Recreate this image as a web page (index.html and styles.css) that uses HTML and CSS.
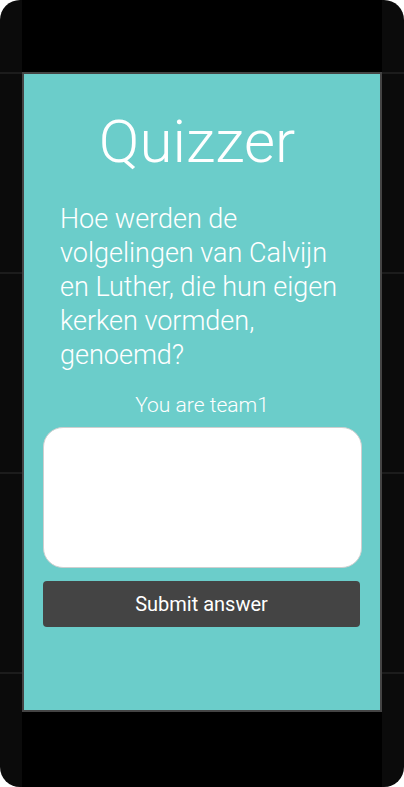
FILE: index.html
```html
<!DOCTYPE html>
<html lang="nl">
<head>
<meta charset="utf-8">
<title>Quizzer</title>
<link rel="stylesheet" href="styles.css">
</head>
<body>
<div class="frame">
  <div class="column">
    <main class="screen">
      <h1 class="title">Quizzer</h1>
      <p class="question">Hoe werden de volgelingen van Calvijn en Luther, die hun eigen kerken vormden, genoemd?</p>
      <p class="team">You are team1</p>
      <form class="answer-form">
        <textarea class="answer" aria-label="Answer"></textarea>
        <button type="button" class="submit">Submit answer</button>
      </form>
    </main>
  </div>
</div>
</body>
</html>
```

FILE: styles.css
```css
html, body {
  margin: 0;
  padding: 0;
  background: #ffffff;
}

.frame {
  width: 404px;
  height: 787px;
  border-radius: 20px;
  overflow: hidden;
  background-color: #0b0b0b;
  background-image: repeating-linear-gradient(to bottom,
    transparent 0, transparent 72px,
    #1c1c1c 72px, #1c1c1c 74px,
    transparent 74px, transparent 200px);
  display: flex;
  justify-content: center;
}

.column {
  width: 360px;
  height: 100%;
  background: #000;
  padding-top: 72px;
  box-sizing: border-box;
}

.screen {
  width: 360px;
  height: 640px;
  box-sizing: border-box;
  border: 2px solid #444;
  background: #6bcdca;
  color: #fff;
  font-family: Roboto, "Liberation Sans", sans-serif;
  display: flex;
  flex-direction: column;
}

.title {
  margin: 32px 0 0;
  padding-right: 10px;
  font-size: 60px;
  font-weight: 300;
  line-height: normal;
  text-align: center;
}

.question {
  margin: 25px 0 0;
  padding: 0 30px 0 36px;
  font-size: 27px;
  font-weight: 300;
  line-height: 34px;
}

.team {
  margin: 20px 0 0;
  font-size: 21px;
  font-weight: 300;
  line-height: 26px;
  text-align: center;
}

.answer-form {
  margin-top: 9px;
  padding-left: 19px;
  display: flex;
  flex-direction: column;
  align-items: flex-start;
}

.answer {
  width: 319px;
  height: 141px;
  box-sizing: border-box;
  border: 1px solid #cfcfcf;
  border-radius: 20px;
  background: #fff;
  resize: none;
  margin: 0;
  padding: 8px 12px;
  font-family: Roboto, "Liberation Sans", sans-serif;
  font-size: 18px;
  outline: none;
}

.submit {
  margin-top: 13px;
  width: 317px;
  height: 46px;
  border: 0;
  border-radius: 4px;
  background: #444;
  color: #fff;
  font-family: Roboto, "Liberation Sans", sans-serif;
  font-size: 20px;
  font-weight: 400;
  cursor: pointer;
}
```
